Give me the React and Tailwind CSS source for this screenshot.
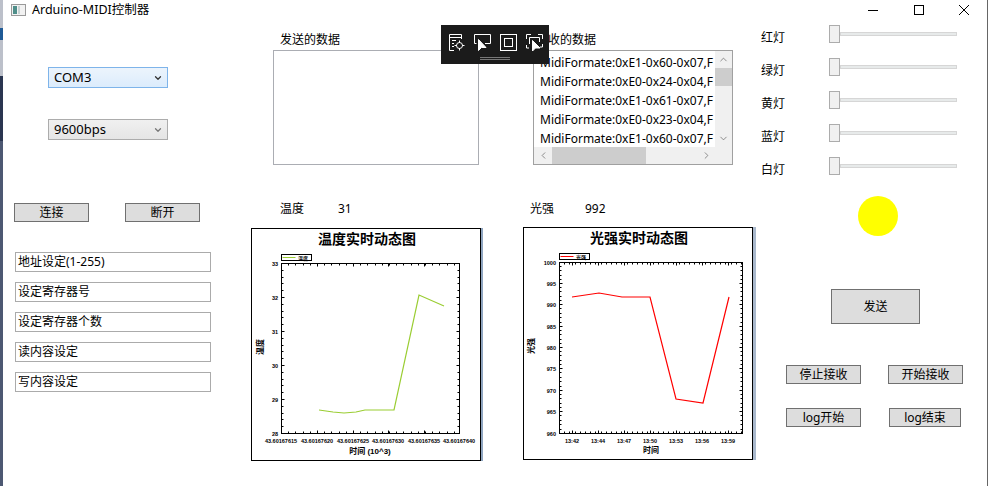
import { ChevronDown, ChevronUp, ChevronLeft, ChevronRight } from 'lucide-react';

const FONT = "font-['Noto_Sans','Noto_Sans_CJK_SC',sans-serif]";

const inputs = ['地址设定(1-255)', '设定寄存器号', '设定寄存器个数', '读内容设定', '写内容设定'];
const lights = ['红灯', '绿灯', '黄灯', '蓝灯', '白灯'];
const midiRows = [
  'MidiFormate:0xE1-0x60-0x07,F',
  'MidiFormate:0xE0-0x24-0x04,F',
  'MidiFormate:0xE1-0x61-0x07,F',
  'MidiFormate:0xE0-0x23-0x04,F',
  'MidiFormate:0xE1-0x60-0x07,F',
];

// coordinates below are relative to the chart box
const tempChart = {
  title: '温度实时动态图',
  titleX: 115,
  legend: '温度',
  color: '#9acd32',
  plot: [29, 34, 207, 204],
  yTicks: [
    ['33', 34], ['32', 68], ['31', 102], ['30', 136], ['29', 170], ['28', 204],
  ],
  xTicks: [
    ['43.60167615', 29], ['43.60167620', 65], ['43.60167625', 101],
    ['43.60167630', 136], ['43.60167635', 172], ['43.60167640', 207],
  ],
  xTitle: '时间 (10^3)',
  xTitleX: 118,
  yTitleX: 8,
  line: '67,181 81,183 92,184 104,183 113,181 142,181 167,66 192,77',
};

const lightChart = {
  title: '光强实时动态图',
  titleX: 115,
  legend: '光强',
  color: '#ff0000',
  plot: [35, 34, 218, 205],
  yTicks: [
    ['1000', 34], ['995', 55], ['990', 76], ['985', 98], ['980', 119],
    ['975', 140], ['970', 162], ['965', 183], ['960', 205],
  ],
  xTicks: [
    ['13:42', 48], ['13:44', 74], ['13:47', 100], ['13:50', 126],
    ['13:53', 152], ['13:56', 178], ['13:59', 204],
  ],
  xTitle: '时间',
  xTitleX: 127,
  yTitleX: 7,
  line: '48,69 75,65 98,69 126,69 152,171 179,175 205,69',
};

function Chart({ data, className }) {
  const [left, top, right, bottom] = data.plot;
  const yMajor = data.yTicks.map(t => t[1]);
  const xMajor = data.xTicks.map(t => t[1]);
  const minorY = [];
  for (let i = 0; i < yMajor.length - 1; i++) {
    for (let j = 1; j < 5; j++) {
      minorY.push(Math.round(yMajor[i] + ((yMajor[i + 1] - yMajor[i]) * j) / 5));
    }
  }
  const minorX = [];
  const step = (xMajor[1] - xMajor[0]) / 5;
  for (let x = left; x <= right; x += step) minorX.push(Math.round(x));

  return (
    <div className={`h-[233px] w-[230px] border border-black bg-white ${className}`}>
      <svg width="228" height="231" className="block" fontFamily="Liberation Sans, Noto Sans CJK SC, sans-serif">
        <text x={data.titleX} y="15" textAnchor="middle" fontSize="14" fontWeight="700" fill="#000" fontFamily="Noto Sans CJK SC, sans-serif">
          {data.title}
        </text>

        <g transform="translate(0.5 0.5)">
          <rect x={left} y="25" width="30" height="6" fill="#fff" stroke="#000" />
          <line x1={left + 1} x2={left + 14} y1="28" y2="28" stroke={data.color} />

          <rect x={left} y={top} width={right - left} height={bottom - top} fill="#fff" stroke="#000" />

          {yMajor.map(y => (
            <g key={y} stroke="#000">
              <line x1={left} x2={left + 3} y1={y} y2={y} />
              <line x1={right - 3} x2={right} y1={y} y2={y} />
            </g>
          ))}
          {minorY.map(y => (
            <g key={y} stroke="#000">
              <line x1={left} x2={left + 2} y1={y} y2={y} />
              <line x1={right - 2} x2={right} y1={y} y2={y} />
            </g>
          ))}
          {minorX.map(x => (
            <g key={x} stroke="#000">
              <line x1={x} x2={x} y1={top} y2={top + 2} />
              <line x1={x} x2={x} y1={bottom - 2} y2={bottom} />
            </g>
          ))}
          {xMajor.map(x => (
            <g key={x} stroke="#000">
              <line x1={x} x2={x} y1={top} y2={top + 3} />
              <line x1={x} x2={x} y1={bottom - 3} y2={bottom} />
            </g>
          ))}
        </g>

        <text x={left + 17} y="30.5" fontSize="5" fontWeight="700" fill="#000" fontFamily="Noto Sans CJK SC, sans-serif">
          {data.legend}
        </text>

        {data.yTicks.map(([label, y]) => (
          <text key={label} x={left - 3} y={y + 2.5} textAnchor="end" fontSize="5.5" fontWeight="700" fill="#000">
            {label}
          </text>
        ))}
        {data.xTicks.map(([label, x]) => (
          <text key={label} x={x} y={bottom + 10} textAnchor="middle" fontSize="5.5" fontWeight="700" fill="#000">
            {label}
          </text>
        ))}

        <polyline points={data.line} fill="none" stroke={data.color} strokeWidth="1.2" />

        <text x={data.xTitleX} y="225" textAnchor="middle" fontSize="8" fontWeight="700" fill="#000">
          {data.xTitle}
        </text>
        <text
          transform={`translate(${data.yTitleX + 3},118) rotate(-90)`}
          textAnchor="middle"
          fontSize="8"
          fontWeight="700"
          fill="#000"
        >
          {data.legend}
        </text>
      </svg>
    </div>
  );
}

function Button({ children, className }) {
  return (
    <button className={`flex items-center justify-center border border-[#707070] bg-[#dddddd] text-xs text-black ${className}`}>
      {children}
    </button>
  );
}

function ToolbarIcons() {
  return (
    <div className="flex items-center gap-[7px] pl-[6px]">
      <svg width="19" height="19" viewBox="0 0 19 19" fill="none" stroke="#fff" strokeWidth="1">
        <path d="M14.5 6V1.5H2.5V17.5H7" />
        <path d="M2.5 4.5H14.5M5 7.5H9M5 10.5H7M5 13.5H7" />
        <circle cx="12.5" cy="12.5" r="3" />
        <path d="M12.5 7.5V10M12.5 15V17.5M7.5 12.5H10M15 12.5H17.5" />
      </svg>
      <svg width="19" height="19" viewBox="0 0 19 19" fill="none" stroke="#fff" strokeWidth="1">
        <path d="M3.5 10.5H1.5V1.5H17.5V10.5H12" />
        <path d="M5.5 6.5V17.5L8.5 14.5H13Z" fill="#fff" />
      </svg>
      <svg width="19" height="19" viewBox="0 0 19 19" fill="none" stroke="#fff" strokeWidth="1">
        <rect x="1.5" y="1.5" width="16" height="16" />
        <rect x="5.5" y="5.5" width="8" height="8" />
      </svg>
      <svg width="19" height="19" viewBox="0 0 19 19" fill="none" stroke="#fff" strokeWidth="1">
        <path d="M1.5 6V1.5H6M13 1.5H17.5V6M1.5 12V15H4M17.5 11V14H15" />
        <path d="M4.5 4.5H14.5V9M4.5 4.5V11" />
        <path d="M7.5 7.5V18L10.5 15H15Z" fill="#fff" />
      </svg>
    </div>
  );
}

export default function App() {
  return (
    <div className={`relative flex h-[486px] w-[988px] overflow-hidden bg-white text-xs text-black ${FONT}`}>
      {/* strip of the window behind */}
      <div className="flex w-[3px] shrink-0 flex-col">
        <div className="h-[28px] bg-[#bcc0ca]" />
        <div className="h-[12px] bg-[#1f5a96]" />
        <div className="h-[36px] bg-[#bcc0ca]" />
        <div className="h-[65px] bg-[#2a3550]" />
        <div className="flex-1 bg-[#4d5872]" />
      </div>

      <div className="flex min-w-0 flex-1 flex-col">
        {/* title bar */}
        <div className="flex h-[20px] items-center">
          <svg width="15" height="12" viewBox="0 0 15 12" className="ml-[8px]">
            <rect x="0.5" y="0.5" width="14" height="11" fill="#f2f2f2" stroke="#9a9a9a" />
            <rect x="2" y="2" width="4" height="8" fill="#4f8f8a" />
            <rect x="7" y="2" width="2" height="8" fill="#c8d4d4" />
          </svg>
          <span className="ml-[6px] text-[12.5px]">Arduino-MIDI控制器</span>
          <div className="ml-auto flex items-center pr-[18px]">
            <svg width="10" height="10" viewBox="0 0 10 10" stroke="#000" fill="none">
              <path d="M0 5.5H10" />
            </svg>
            <svg width="10" height="10" viewBox="0 0 10 10" stroke="#000" fill="none" className="ml-[36px]">
              <rect x="0.5" y="0.5" width="9" height="9" />
            </svg>
            <svg width="10" height="10" viewBox="0 0 10 10" stroke="#000" fill="none" className="ml-[35px]">
              <path d="M0 0L10 10M10 0L0 10" />
            </svg>
          </div>
        </div>

        <div className="flex flex-1">
          {/* connection column */}
          <div className="flex w-[248px] shrink-0 flex-col">
            <div className="ml-[45px] mt-[47px] flex h-[21px] w-[120px] items-center justify-between border border-[#7eb4ea] bg-gradient-to-b from-[#ecf4fc] to-[#dcecfc] pl-[5px] pr-[4px] text-[13px]">
              <span>COM3</span>
              <ChevronDown size={10} strokeWidth={3} className="text-[#333]" />
            </div>
            <div className="ml-[45px] mt-[31px] flex h-[21px] w-[120px] items-center justify-between border border-[#acacac] bg-gradient-to-b from-[#f0f0f0] to-[#e5e5e5] pl-[5px] pr-[4px] text-[13px]">
              <span>9600bps</span>
              <ChevronDown size={10} strokeWidth={3} className="text-[#777]" />
            </div>

            <div className="ml-[11px] mt-[63px] flex gap-[36px]">
              <Button className="h-[19px] w-[75px]">连接</Button>
              <Button className="h-[19px] w-[75px]">断开</Button>
            </div>

            <div className="ml-[12px] mt-[30px] flex flex-col gap-[10px]">
              {inputs.map(text => (
                <div key={text} className="flex h-[20px] w-[196px] items-center border border-[#ababab] pl-[2px]">
                  {text}
                </div>
              ))}
            </div>
          </div>

          {/* sent data + temperature */}
          <div className="flex w-[272px] shrink-0 flex-col">
            <div className="ml-[29px] mt-[12px] h-[16px] leading-[16px]">发送的数据</div>
            <div className="ml-[22px] mt-[2px] h-[115px] w-[206px] border border-[#abadb3]" />
            <div className="mt-[36px] flex h-[16px] pl-[29px] leading-[16px]">
              <span className="w-[58px]">温度</span>
              <span>31</span>
            </div>
            <Chart data={tempChart} className="mt-[11px] shadow-[2px_0_0_#8fa5c0]" />
          </div>

          {/* received data + light */}
          <div className="flex w-[237px] shrink-0 flex-col">
            <div className="ml-[13px] mt-[12px] h-[16px] leading-[16px]">接收的数据</div>
            <div className="ml-[10px] mt-[2px] flex h-[115px] w-[200px] flex-col border border-[#a0a0a0]">
              <div className="flex min-h-0 flex-1">
                <div className="min-w-0 flex-1 overflow-hidden whitespace-nowrap pl-[6px] pt-[2px] text-[12px]">
                  {midiRows.map((row, i) => (
                    <div key={i} className="h-[19px] leading-[19px]">{row}</div>
                  ))}
                </div>
                <div className="flex w-[17px] shrink-0 flex-col items-center bg-[#f0f0f0] text-[#606060]">
                  <div className="flex h-[17px] items-center"><ChevronUp size={11} strokeWidth={1.5} /></div>
                  <div className="h-[18px] w-full bg-[#cdcdcd]" />
                  <div className="flex-1" />
                  <div className="flex h-[17px] items-center"><ChevronDown size={11} strokeWidth={1.5} /></div>
                </div>
              </div>
              <div className="flex h-[17px] shrink-0 items-center bg-[#f0f0f0] text-[#606060]">
                <div className="flex w-[18px] justify-center"><ChevronLeft size={11} strokeWidth={1.5} /></div>
                <div className="h-full w-[94px] bg-[#cdcdcd]" />
                <div className="flex-1" />
                <div className="flex w-[17px] justify-center"><ChevronRight size={11} strokeWidth={1.5} /></div>
                <div className="w-[17px]" />
              </div>
            </div>
            <div className="mt-[36px] flex h-[16px] pl-[7px] leading-[16px]">
              <span className="w-[55px]">光强</span>
              <span>992</span>
            </div>
            <Chart data={lightChart} className="mt-[10px] shadow-[3px_0_0_#a9b8cc]" />
          </div>

          {/* lights + action buttons */}
          <div className="flex flex-1 flex-col">
            <div className="mt-[5px] flex flex-col gap-[15px]">
              {lights.map(name => (
                <div key={name} className="flex h-[18px] items-center">
                  <span className="relative top-[4px] ml-[1px] w-[68px]">{name}</span>
                  <div className="h-[18px] w-[11px] border border-[#acacac] bg-[#f0f0f0]" />
                  <div className="h-[4px] w-[117px] border border-[#d6d6d6] bg-[#e7eaea]" />
                </div>
              ))}
            </div>

            <div className="ml-[98px] mt-[21px] h-[40px] w-[40px] rounded-full bg-[#ffff00]" />

            <Button className="ml-[71px] mt-[53px] h-[35px] w-[89px]">发送</Button>

            <div className="ml-[26px] mt-[41px] flex gap-[27px]">
              <Button className="h-[19px] w-[75px]">停止接收</Button>
              <Button className="h-[19px] w-[75px]">开始接收</Button>
            </div>
            <div className="ml-[26px] mt-[24px] flex gap-[28px]">
              <Button className="h-[19px] w-[75px]">log开始</Button>
              <Button className="h-[19px] w-[72px]">log结束</Button>
            </div>
          </div>
        </div>
      </div>

      {/* edge of the window behind */}
      <div className="w-[1px] shrink-0 bg-[#666666]" />

      {/* snipping toolbar floating over the window */}
      <div className="absolute left-[441px] top-[25px] h-[39px] w-[108px] bg-[#1b1b1b]">
        <div className="pt-[8px]">
          <ToolbarIcons />
        </div>
        <div className="mx-auto mt-[5px] h-[3px] w-[30px] border-y border-[#777]" />
      </div>
    </div>
  );
}
